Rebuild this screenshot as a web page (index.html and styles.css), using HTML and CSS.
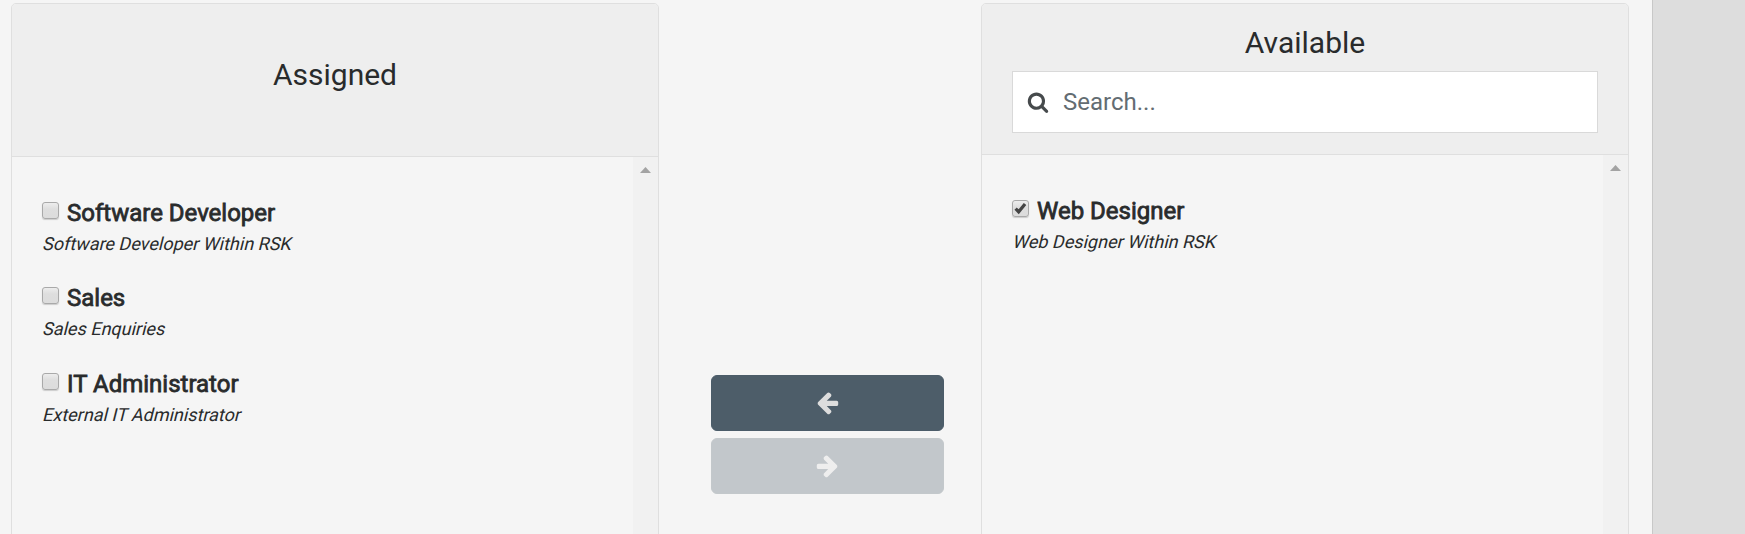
FILE: index.html
```html
<!DOCTYPE html>
<html lang="en">
<head>
<meta charset="utf-8">
<title>Role assignment</title>
<link rel="stylesheet" href="styles.css">
</head>
<body>
<div class="page">
  <main class="content">
    <section class="panel">
      <header class="panel-header panel-header-tall"><h2 class="title">Assigned</h2></header>
      <div class="panel-body">
        <ul class="roles">
          <li class="role"><label class="role-label"><span class="box"></span><span class="name">Software Developer</span></label><em class="desc">Software Developer Within RSK</em></li>
          <li class="role"><label class="role-label"><span class="box"></span><span class="name">Sales</span></label><em class="desc">Sales Enquiries</em></li>
          <li class="role"><label class="role-label"><span class="box"></span><span class="name">IT Administrator</span></label><em class="desc">External IT Administrator</em></li>
        </ul>
        <div class="scrollbar"><svg class="scroll-up" viewBox="0 0 11 6"><path d="M0 6 5.5 0 11 6z"/></svg></div>
      </div>
    </section>
    <div class="actions">
      <button class="move"><svg class="arrow" viewBox="0 0 1792 1792"><path d="M1664 896v128q0 53-32.5 90.5t-84.5 37.5h-704l293 294q38 36 38 90t-38 90l-75 76q-37 37-90 37-52 0-91-37l-651-652q-37-37-37-90 0-52 37-91l651-650q38-38 91-38 52 0 90 38l75 74q38 38 38 91t-38 91l-293 293h704q52 0 84.5 37.5t32.5 90.5z"/></svg></button>
      <button class="move move-disabled" disabled><svg class="arrow" viewBox="0 0 1792 1792"><path transform="translate(1792 0) scale(-1 1)" d="M1664 896v128q0 53-32.5 90.5t-84.5 37.5h-704l293 294q38 36 38 90t-38 90l-75 76q-37 37-90 37-52 0-91-37l-651-652q-37-37-37-90 0-52 37-91l651-650q38-38 91-38 52 0 90 38l75 74q38 38 38 91t-38 91l-293 293h704q52 0 84.5 37.5t32.5 90.5z"/></svg></button>
    </div>
    <section class="panel">
      <header class="panel-header">
        <h2 class="title">Available</h2>
        <div class="search">
          <svg class="search-icon" viewBox="0 0 1792 1792"><path d="M1216 832q0-185-131.5-316.5t-316.5-131.5-316.5 131.5-131.5 316.5 131.5 316.5 316.5 131.5 316.5-131.5 131.5-316.5zm512 832q0 52-38 90t-90 38q-54 0-90-38l-343-342q-179 124-399 124-143 0-273.5-55.5t-225-150-150-225-55.5-273.5 55.5-273.5 150-225 225-150 273.5-55.5 273.5 55.5 225 150 150 225 55.5 273.5q0 220-124 399l343 343q37 37 37 90z"/></svg>
          <span class="placeholder">Search...</span>
        </div>
      </header>
      <div class="panel-body">
        <ul class="roles">
          <li class="role"><label class="role-label"><span class="box"><svg class="check" viewBox="0 0 12 12"><path d="M1.5 6.2 4.3 9 10.2 1.8"/></svg></span><span class="name">Web Designer</span></label><em class="desc">Web Designer Within RSK</em></li>
        </ul>
        <div class="scrollbar"><svg class="scroll-up" viewBox="0 0 11 6"><path d="M0 6 5.5 0 11 6z"/></svg></div>
      </div>
    </section>
  </main>
  <aside class="gutter"></aside>
</div>
</body>
</html>
```
FILE: styles.css
```css
* { box-sizing: border-box; }
body { margin: 0; background: #f5f5f5; color: #292b2c; font-family: Roboto, sans-serif; }
.page { display: flex; height: 534px; overflow: hidden; }
.content { display: flex; width: 1652px; padding: 3px 0 0 11px; }
.gutter { flex: 1; background: #ddd; border-left: 1px solid #c8c8c8; }
.panel { display: flex; flex-direction: column; width: 648px; height: 560px; border: 1px solid #dfdfdf; border-radius: 5px; overflow: hidden; flex: none; }
.panel-header { height: 151px; padding: 19px 30px 0; background: #eee; border-bottom: 1px solid #dfdfdf; flex: none; }
.panel-header-tall { height: 153px; padding-top: 51px; }
.title { margin: 0; font-size: 30px; font-weight: 400; line-height: 40px; text-align: center; }
.search { display: flex; align-items: center; height: 62px; margin-top: 8px; padding-left: 14px; background: #fff; border: 1px solid #d9d9d9; }
.search-icon { width: 22px; height: 22px; fill: #464a4c; }
.placeholder { margin-left: 14px; font-size: 24px; color: #636c72; }
.panel-body { display: flex; flex: 1; }
.roles { flex: 1; margin: 0; padding: 38.9px 0 0 30px; list-style: none; }
.role { height: 85.5px; }
.role-label { display: flex; height: 34px; }
.box { width: 17px; height: 17px; margin-top: 6px; border: 1px solid #a9a9a9; border-radius: 3px; background: linear-gradient(#ededed, #dedede 40%, #dcdcdc); box-shadow: 0 1px 1px #ccc; flex: none; }
.check { display: block; width: 13px; height: 13px; margin: 1px; fill: none; stroke: #444; stroke-width: 3; }
.name { margin-left: 8px; font-size: 24px; line-height: 34px; -webkit-text-stroke: 0.8px #292b2c; }
/* upright Roboto slanted around its baseline */
.desc { display: block; font-size: 18px; font-style: normal; line-height: 27px; transform: skewX(-14deg); transform-origin: 0 20px; }
.scrollbar { width: 25px; padding: 10px 0 0 7px; background: #f1f1f1; }
.scroll-up { display: block; width: 11px; height: 6px; fill: #a3a3a3; }
.actions { display: flex; flex-direction: column; gap: 7px; width: 322px; padding: 372px 37px 0 52px; flex: none; }
.move { display: flex; justify-content: center; align-items: center; width: 233px; height: 56px; padding: 0 0 1px; border: 1px solid #4b5c69; border-radius: 6px; background: #4d5d69; flex: none; }
.move-disabled { border-color: #c3c8cb; background: #c2c7cb; }
.arrow { width: 25px; height: 25px; fill: #ddd; }
.move-disabled .arrow { fill: #eee; }
```
